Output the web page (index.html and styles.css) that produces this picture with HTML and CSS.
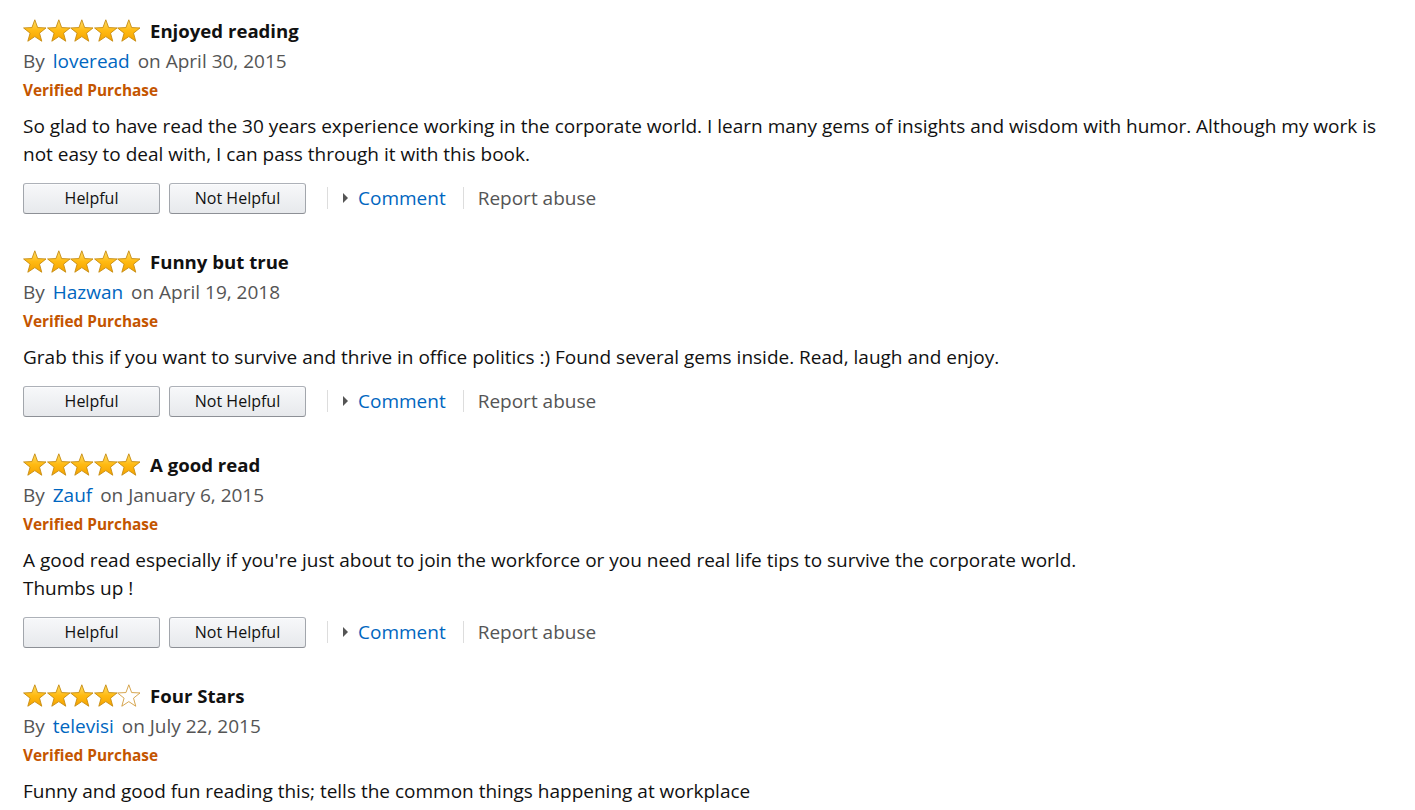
FILE: index.html
```html
<!DOCTYPE html>
<html>
<head>
<meta charset="utf-8">
<link rel="stylesheet" href="styles.css">
</head>
<body>
<svg width="0" height="0" style="position:absolute">
  <defs>
    <linearGradient id="gold" x1="0" y1="0" x2="0" y2="1">
      <stop offset="0" stop-color="#ffdf6a"/>
      <stop offset="0.5" stop-color="#ffba12"/>
      <stop offset="1" stop-color="#f5a300"/>
    </linearGradient>
    <symbol id="star-full" viewBox="0 0 24 24">
      <path d="M12 0.6L14.9 8.5L23.4 8.9L16.8 14.2L19.1 22.4L12 17.7L4.9 22.4L7.2 14.2L0.6 8.9L9.1 8.5Z" fill="url(#gold)" stroke="#c58a10" stroke-width="0.9" stroke-linejoin="round"/>
    </symbol>
    <symbol id="star-empty" viewBox="0 0 24 24">
      <path d="M12 0.6L14.9 8.5L23.4 8.9L16.8 14.2L19.1 22.4L12 17.7L4.9 22.4L7.2 14.2L0.6 8.9L9.1 8.5Z" fill="#fff" stroke="#d19a3a" stroke-width="0.9" stroke-linejoin="round"/>
    </symbol>
  </defs>
</svg>

<div class="reviews">
  <div class="review">
    <div class="head">
      <span class="stars"><svg><use href="#star-full"/></svg><svg><use href="#star-full"/></svg><svg><use href="#star-full"/></svg><svg><use href="#star-full"/></svg><svg><use href="#star-full"/></svg></span>
      <span class="title">Enjoyed reading</span>
    </div>
    <div class="byline">By <a class="author">loveread</a> on April 30, 2015</div>
    <div class="verified">Verified Purchase</div>
    <p class="body">So glad to have read the 30 years experience working in the corporate world. I learn many gems of insights and wisdom with humor. Although my work is not easy to deal with, I can pass through it with this book.</p>
    <div class="actions">
      <button class="btn">Helpful</button>
      <button class="btn">Not Helpful</button>
      <span class="sep"></span>
      <span class="tri"></span><a class="comment">Comment</a>
      <span class="sep sep2"></span>
      <span class="report">Report abuse</span>
    </div>
  </div>

  <div class="review">
    <div class="head">
      <span class="stars"><svg><use href="#star-full"/></svg><svg><use href="#star-full"/></svg><svg><use href="#star-full"/></svg><svg><use href="#star-full"/></svg><svg><use href="#star-full"/></svg></span>
      <span class="title">Funny but true</span>
    </div>
    <div class="byline">By <a class="author">Hazwan</a> on April 19, 2018</div>
    <div class="verified">Verified Purchase</div>
    <p class="body">Grab this if you want to survive and thrive in office politics :) Found several gems inside. Read, laugh and enjoy.</p>
    <div class="actions">
      <button class="btn">Helpful</button>
      <button class="btn">Not Helpful</button>
      <span class="sep"></span>
      <span class="tri"></span><a class="comment">Comment</a>
      <span class="sep sep2"></span>
      <span class="report">Report abuse</span>
    </div>
  </div>

  <div class="review">
    <div class="head">
      <span class="stars"><svg><use href="#star-full"/></svg><svg><use href="#star-full"/></svg><svg><use href="#star-full"/></svg><svg><use href="#star-full"/></svg><svg><use href="#star-full"/></svg></span>
      <span class="title">A good read</span>
    </div>
    <div class="byline">By <a class="author">Zauf</a> on January 6, 2015</div>
    <div class="verified">Verified Purchase</div>
    <p class="body">A good read especially if you're just about to join the workforce or you need real life tips to survive the corporate world.<br>Thumbs up !</p>
    <div class="actions">
      <button class="btn">Helpful</button>
      <button class="btn">Not Helpful</button>
      <span class="sep"></span>
      <span class="tri"></span><a class="comment">Comment</a>
      <span class="sep sep2"></span>
      <span class="report">Report abuse</span>
    </div>
  </div>

  <div class="review">
    <div class="head">
      <span class="stars"><svg><use href="#star-full"/></svg><svg><use href="#star-full"/></svg><svg><use href="#star-full"/></svg><svg><use href="#star-full"/></svg><svg><use href="#star-empty"/></svg></span>
      <span class="title">Four Stars</span>
    </div>
    <div class="byline">By <a class="author">televisi</a> on July 22, 2015</div>
    <div class="verified">Verified Purchase</div>
    <p class="body">Funny and good fun reading this; tells the common things happening at workplace</p>
  </div>
</div>
</body>
</html>
```

FILE: styles.css
```css
html, body {
  margin: 0;
  padding: 0;
  background: #fff;
}
body {
  font-family: "Open Sans", "Noto Sans", sans-serif;
  color: #111;
  font-size: 19px;
  line-height: 28px;
}
.reviews {
  padding: 16px 23px 0 23px;
}
.review {
  margin-bottom: 33px;
}
.head {
  display: flex;
  align-items: center;
  height: 30px;
}
.stars {
  display: flex;
  margin-right: 9px;
}
.stars svg {
  width: 23.6px;
  height: 24px;
  display: block;
}
.title {
  font-weight: 700;
  font-size: 18.6px;
  color: #111;
}
.byline {
  color: #555;
  height: 30px;
  line-height: 30px;
}
.author {
  color: #0066c0;
  margin: 0 3px;
}
.verified {
  color: #c45500;
  font-weight: 700;
  font-size: 15.4px;
  line-height: 28px;
  padding-top: 1px;
}
.body {
  margin: 7px 0 14px;
}
.actions {
  display: flex;
  align-items: center;
  height: 32px;
}
.btn {
  font-family: inherit;
  font-size: 16px;
  color: #111;
  width: 137px;
  height: 31px;
  padding: 0;
  margin-right: 9px;
  border: 1px solid #adb1b8;
  border-color: #adb1b8 #a2a6ac #8d9096;
  border-radius: 3px;
  background: linear-gradient(to bottom, #f7f8fa, #e7e9ec);
  box-shadow: 0 1px 0 rgba(255,255,255,.6) inset;
}
.sep {
  width: 1px;
  height: 22px;
  background: #ddd;
  margin: 0 14px 0 12px;
}
.sep2 {
  margin: 0 14px 0 17px;
}
.tri {
  width: 0;
  height: 0;
  border-top: 5px solid transparent;
  border-bottom: 5px solid transparent;
  border-left: 5px solid #555;
  margin: 0 10px 0 1px;
}
.comment {
  color: #0066c0;
}
.report {
  color: #555;
}
```
